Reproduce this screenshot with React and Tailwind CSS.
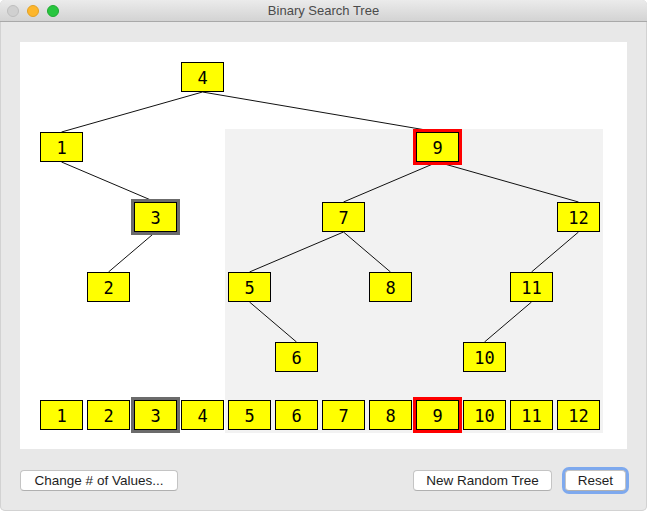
const NODES = [
  { v: 4, level: 0 },
  { v: 1, level: 1 },
  { v: 9, level: 1 },
  { v: 3, level: 2 },
  { v: 7, level: 2 },
  { v: 12, level: 2 },
  { v: 2, level: 3 },
  { v: 5, level: 3 },
  { v: 8, level: 3 },
  { v: 11, level: 3 },
  { v: 6, level: 4 },
  { v: 10, level: 4 },
]

const EDGES = [
  [4, 1], [4, 9], [1, 3], [3, 2], [9, 7], [9, 12],
  [7, 5], [7, 8], [5, 6], [12, 11], [11, 10],
]

const HIGHLIGHT = { 3: 'gray', 9: 'red' }

const nodeX = (v) => 20 + 47 * (v - 1)
const levelOf = (v) => NODES.find((n) => n.v === v).level
const nodeY = (v) => 20 + 70 * levelOf(v)

function Node({ v, x, y }) {
  const hl = HIGHLIGHT[v]
  return (
    <div
      className={`absolute w-[43px] h-[30px] bg-[#ffff00] border border-black flex items-center justify-center pt-[2px] text-[17px] leading-none text-black font-['DejaVu_Sans_Mono',monospace] ${
        hl === 'gray'
          ? 'shadow-[0_0_0_3px_#6b6b6b]'
          : hl === 'red'
          ? 'shadow-[0_0_0_3px_#ff0000]'
          : ''
      }`}
      style={{ left: x, top: y }}
    >
      {v}
    </div>
  )
}

function Button({ children, className = '' }) {
  return (
    <button
      className={`h-[21px] bg-white border border-[#c4c4c4] border-b-[#b0b0b0] rounded-[4px] text-[13.5px] leading-none text-[#1e1e1e] font-['Liberation_Sans',Arial,sans-serif] flex items-center justify-center ${className}`}
    >
      {children}
    </button>
  )
}

export default function App() {
  return (
    <div className="w-[647px] h-[511px] bg-white">
      <div className="w-[647px] h-[511px] rounded-[5px] overflow-hidden bg-[#e8e8e8] flex flex-col shadow-[inset_0_0_0_1px_#d2d2d2]">
        <div className="relative h-[22px] shrink-0 bg-gradient-to-b from-[#ebebeb] to-[#d3d3d3] border-b border-[#a9a9a9] flex items-center justify-center">
          <div className="absolute left-[7px] top-[5px] flex gap-[8px]">
            <span className="w-[12px] h-[12px] rounded-full bg-[#d0d0d0] border border-[#bdbdbd]" />
            <span className="w-[12px] h-[12px] rounded-full bg-[#fdb62c] border border-[#e2a024]" />
            <span className="w-[12px] h-[12px] rounded-full bg-[#28c63f] border border-[#20aa32]" />
          </div>
          <span className="text-[13px] text-[#4b4b4b] font-['Liberation_Sans',Arial,sans-serif]">
            Binary Search Tree
          </span>
        </div>

        <div className="flex flex-col px-[20px] pt-[20px]">
          <div className="relative w-[607px] h-[407px] bg-white">
            <div className="absolute left-[205px] top-[87px] w-[378px] h-[304px] bg-[#f2f2f2]" />
            <svg className="absolute inset-0" width="607" height="407">
              {EDGES.map(([p, c]) => (
                <line
                  key={`${p}-${c}`}
                  x1={nodeX(p) + 21.5}
                  y1={nodeY(p) + 30}
                  x2={nodeX(c) + 21.5}
                  y2={nodeY(c)}
                  stroke="#111"
                  strokeWidth="1"
                />
              ))}
            </svg>
            {NODES.map((n) => (
              <Node key={n.v} v={n.v} x={nodeX(n.v)} y={nodeY(n.v)} />
            ))}
            {NODES.map((n) => (
              <Node key={`row-${n.v}`} v={n.v} x={nodeX(n.v)} y={358} />
            ))}
          </div>

          <div className="mt-[21px] flex items-center justify-between w-[607px]">
            <Button className="w-[158px]">Change # of Values...</Button>
            <div className="flex items-center gap-[13px] mr-[1px]">
              <Button className="w-[139px]">New Random Tree</Button>
              <Button className="w-[61px] shadow-[0_0_0_3px_#7ea9ee]">Reset</Button>
            </div>
          </div>
        </div>
      </div>
    </div>
  )
}
